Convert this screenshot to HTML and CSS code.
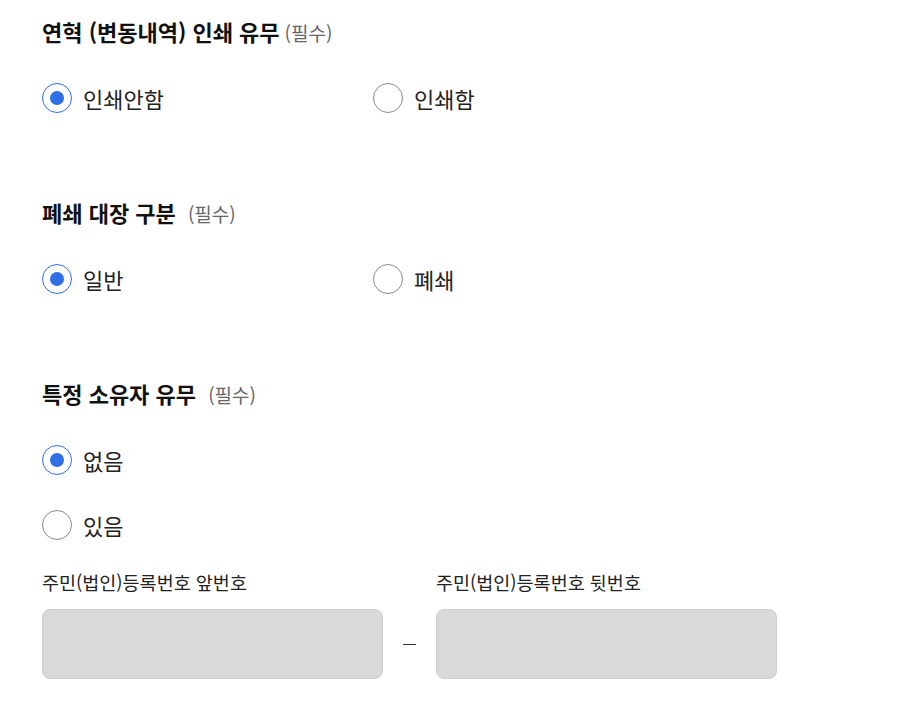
FILE: index.html
```html
<!DOCTYPE html>
<html lang="ko">
<head>
<meta charset="utf-8">
<link rel="stylesheet" href="styles.css">
</head>
<body>
<div class="form">
  <section class="group">
    <h2 class="title">연혁 (변동내역) 인쇄 유무<span class="req req-tight">(필수)</span></h2>
    <div class="options cols">
      <label class="opt"><span class="radio checked"></span><span class="opt-text">인쇄안함</span></label>
      <label class="opt"><span class="radio"></span><span class="opt-text">인쇄함</span></label>
    </div>
  </section>
  <section class="group">
    <h2 class="title">폐쇄 대장 구분 <span class="req">(필수)</span></h2>
    <div class="options cols">
      <label class="opt"><span class="radio checked"></span><span class="opt-text">일반</span></label>
      <label class="opt"><span class="radio"></span><span class="opt-text">폐쇄</span></label>
    </div>
  </section>
  <section class="group">
    <h2 class="title">특정 소유자 유무 <span class="req">(필수)</span></h2>
    <div class="options stack">
      <label class="opt"><span class="radio checked"></span><span class="opt-text">없음</span></label>
      <label class="opt"><span class="radio"></span><span class="opt-text">있음</span></label>
    </div>
    <div class="id-row">
      <div class="field">
        <div class="field-label">주민(법인)등록번호 앞번호</div>
        <div class="input"></div>
      </div>
      <div class="dash"><span></span></div>
      <div class="field">
        <div class="field-label">주민(법인)등록번호 뒷번호</div>
        <div class="input"></div>
      </div>
    </div>
  </section>
</div>
</body>
</html>
```

FILE: styles.css
```css
* { box-sizing: border-box; }
html, body { margin: 0; background: #fff; }
body {
  font-family: "Noto Sans CJK KR", "Noto Sans", sans-serif;
  color: #1a1a1a;
}
.form {
  padding: 16px 42px 0;
  display: flex;
  flex-direction: column;
  gap: 84px;
}
.title {
  margin: 0;
  height: 30px;
  font-size: 22px;
  font-weight: 700;
  line-height: 30px;
  color: #111;
}
.req {
  font-size: 19px;
  font-weight: 400;
  line-height: 1;
  color: #666;
  margin-left: 6px;
}
.req-tight { margin-left: 5px; }
.options { margin-top: 37px; }
.cols {
  display: grid;
  grid-template-columns: 331px 331px;
}
.stack {
  display: flex;
  flex-direction: column;
  gap: 35px;
}
.opt {
  display: flex;
  align-items: center;
  height: 30px;
}
.radio {
  width: 30px;
  height: 30px;
  border-radius: 50%;
  border: 1px solid #8a8a8a;
  display: flex;
  align-items: center;
  justify-content: center;
  flex: none;
}
.radio.checked { border-color: #2f6fe8; }
.radio.checked::after {
  content: "";
  width: 14px;
  height: 14px;
  border-radius: 50%;
  background: #2f6fe8;
}
.opt-text {
  margin-left: 11px;
  font-size: 22px;
  line-height: 30px;
  color: #222;
}
.id-row {
  display: flex;
  align-items: flex-end;
  margin-top: 29px;
}
.field { width: 341px; }
.field-label {
  font-size: 18.5px;
  line-height: 26px;
  color: #222;
  margin-bottom: 14px;
}
.input {
  height: 70px;
  background: #d9d9d9;
  border: 1px solid #cfcfcf;
  border-radius: 8px;
}
.dash {
  width: 53px;
  height: 70px;
  display: flex;
  align-items: center;
  justify-content: center;
}
.dash span {
  width: 13px;
  height: 1px;
  background: #333;
}
```
